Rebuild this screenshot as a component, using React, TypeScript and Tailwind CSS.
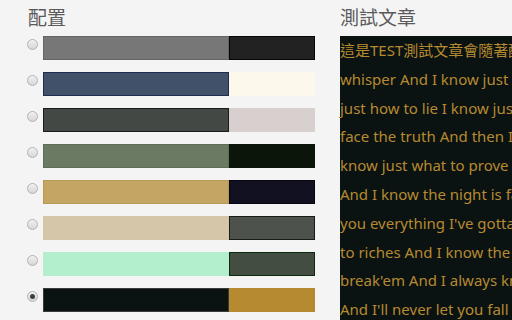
import React from 'react'

type Scheme = {
  left: string
  right: string
  checked?: boolean
}

// each scheme: background swatch + text swatch, borders written out in full
const schemes: Scheme[] = [
  { left: 'bg-[#777777] border-[#666666]', right: 'bg-[#222222] border-[#050505]' },
  { left: 'bg-[#42516a] border-[#1b2d52]', right: 'bg-[#fdf8ec] border-[#fdf8ec]' },
  { left: 'bg-[#444845] border-[#1a1a1a]', right: 'bg-[#d8d0cf] border-[#d8d0cf]' },
  { left: 'bg-[#6a7a63] border-[#5d6d56]', right: 'bg-[#0b1509] border-[#0b1509]' },
  { left: 'bg-[#c4a563] border-[#b99a55]', right: 'bg-[#121122] border-[#050510]' },
  { left: 'bg-[#d6c6a9] border-[#d6c6a9]', right: 'bg-[#4e524c] border-[#1a1a1a]' },
  { left: 'bg-[#b3eecd] border-[#b3eecd]', right: 'bg-[#434d42] border-[#0c2a0c]' },
  { left: 'bg-[#0b1212] border-[#3a3a3a]', right: 'bg-[#b68a30] border-[#b68a30]', checked: true },
]

const lines = [
  '這是TEST測試文章會隨著配置改變顏色 I know just how to',
  'whisper And I know just how to cry I know',
  'just how to lie I know just where to find the answers',
  'face the truth And then I know just how to',
  'know just what to prove I know when to',
  'And I know the night is far from over',
  "you everything I've gotta give to you",
  'to riches And I know the way to',
  "break'em And I always know what",
  "And I'll never let you fall And",
]

function Radio({ checked }: { checked?: boolean }) {
  return (
    <div className="mt-[3px] flex h-[11px] w-[11px] flex-none items-center justify-center rounded-full border border-[#b3b3b3] bg-gradient-to-b from-[#f2f2f2] to-[#d6d6d6]">
      {checked ? <div className="h-[5px] w-[5px] rounded-full bg-[#3f3f3f]" /> : null}
    </div>
  )
}

export default function App() {
  return (
    <div
      className="flex h-[320px] w-[512px] overflow-hidden bg-[#f4f4f4]"
      style={{ fontFamily: '"Noto Sans", "Noto Sans CJK TC", sans-serif' }}
    >
      <div className="flex w-[340px] flex-none flex-col pl-[27px]">
        <h2 className="h-[36px] pl-[1px] text-[19px] leading-[36px] text-[#5a5a5a]">配置</h2>
        <ul className="flex flex-col gap-3">
          {schemes.map((s, i) => (
            <li key={i} className="flex items-start gap-[5px]">
              <Radio checked={s.checked} />
              <div className="flex h-[24px]">
                <div className={`h-[24px] w-[186px] border ${s.left}`} />
                <div className={`h-[24px] w-[86px] border ${s.right}`} />
              </div>
            </li>
          ))}
        </ul>
      </div>
      <div className="flex flex-col">
        <h2 className="h-[36px] text-[19px] leading-[36px] text-[#5a5a5a]">測試文章</h2>
        <div className="h-[400px] w-[600px] bg-[#0b1212] text-[15px] leading-[28.8px] text-[#b68a30]">
          {lines.map((l, i) => (
            <p key={i} className="whitespace-nowrap">
              {l}
            </p>
          ))}
        </div>
      </div>
    </div>
  )
}
